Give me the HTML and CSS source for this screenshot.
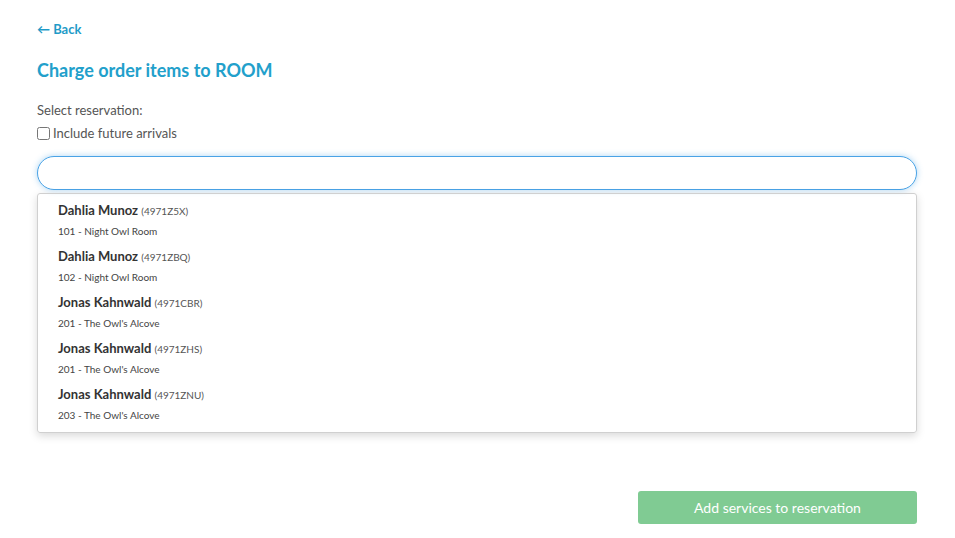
FILE: index.html
```html
<!DOCTYPE html>
<html lang="en">
<head>
  <meta charset="UTF-8" />
  <title>Charge order items to ROOM</title>
  <link rel="stylesheet" href="styles.css">
</head>
<body>
  <div class="page">
    <a class="back" href="#">&larr; Back</a>
    <h1>Charge order items to ROOM</h1>

    <div class="label">Select reservation:</div>
    <label class="check"><input type="checkbox"> Include future arrivals</label>

    <div class="search">
      <input type="text" class="search-input">
      <ul class="results">
        <li><div class="name">Dahlia Munoz <span class="code">(4971Z5X)</span></div><div class="room">101 - Night Owl Room</div></li>
        <li><div class="name">Dahlia Munoz <span class="code">(4971ZBQ)</span></div><div class="room">102 - Night Owl Room</div></li>
        <li><div class="name">Jonas Kahnwald <span class="code">(4971CBR)</span></div><div class="room">201 - The Owl's Alcove</div></li>
        <li><div class="name">Jonas Kahnwald <span class="code">(4971ZHS)</span></div><div class="room">201 - The Owl's Alcove</div></li>
        <li><div class="name">Jonas Kahnwald <span class="code">(4971ZNU)</span></div><div class="room">203 - The Owl's Alcove</div></li>
      </ul>
    </div>

    <div class="actions">
      <button class="submit" disabled>Add services to reservation</button>
    </div>
  </div>
</body>
</html>
```

FILE: styles.css
```css
body {
  margin: 0;
  font-family: Lato, "Liberation Sans", sans-serif;
  background: #fff;
  color: #333;
}
.page {
  padding: 18px 38px 0 37px;
}
.back {
  display: inline-block;
  font-size: 13px;
  font-weight: bold;
  color: #1f9bc8;
  text-decoration: none;
}
h1 {
  margin: 22px 0 0;
  font-size: 18px;
  font-weight: bold;
  color: #22a0cb;
}
.label {
  margin-top: 21px;
  font-size: 13px;
  color: #555;
}
.check {
  display: flex;
  align-items: center;
  margin-top: 7px;
  font-size: 13px;
  color: #555;
}
.check input {
  margin: 0 3px 0 0;
  width: 13px;
  height: 13px;
}
.search {
  margin-top: 15px;
}
.search-input {
  display: block;
  box-sizing: border-box;
  width: 100%;
  height: 34px;
  border: 1px solid #4aa3e6;
  border-radius: 17px;
  box-shadow: 0 0 6px rgba(74, 163, 230, 0.45);
  outline: none;
  padding: 0 16px;
  font: inherit;
}
.results {
  list-style: none;
  margin: 3px 0 0;
  padding: 4px 0 4px;
  border: 1px solid #d0d0d0;
  border-radius: 3px;
  box-shadow: 0 3px 8px rgba(0, 0, 0, 0.15);
}
.results li {
  padding: 4px 20px 0;
  height: 42px;
}
.name {
  font-size: 13px;
  font-weight: bold;
  color: #333;
}
.code {
  font-size: 10px;
  font-weight: normal;
  color: #555;
}
.room {
  margin-top: 7px;
  font-size: 10px;
  color: #444;
}
.actions {
  display: flex;
  justify-content: flex-end;
  margin-top: 58px;
}
.submit {
  width: 279px;
  height: 33px;
  border: 0;
  border-radius: 3px;
  background: #80cb93;
  color: #fff;
  font-family: inherit;
  font-size: 14px;
}
```
